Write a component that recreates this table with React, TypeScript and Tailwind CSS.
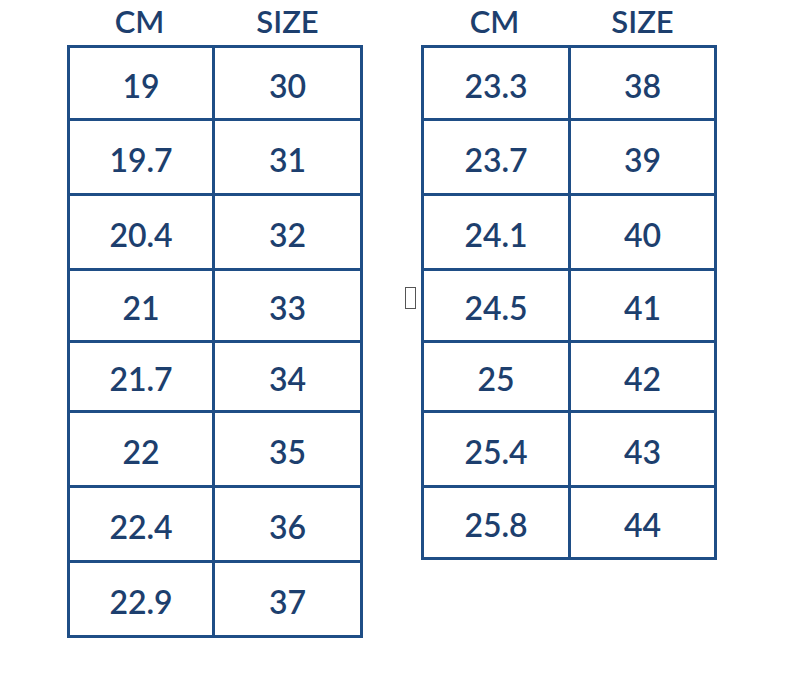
const left = [
  ["19", "30"],
  ["19.7", "31"],
  ["20.4", "32"],
  ["21", "33"],
  ["21.7", "34"],
  ["22", "35"],
  ["22.4", "36"],
  ["22.9", "37"],
];

const right = [
  ["23.3", "38"],
  ["23.7", "39"],
  ["24.1", "40"],
  ["24.5", "41"],
  ["25", "42"],
  ["25.4", "43"],
  ["25.8", "44"],
];

const leftHeights = [
  "h-[73px]",
  "h-[75px]",
  "h-[75px]",
  "h-[72px]",
  "h-[70px]",
  "h-[75px]",
  "h-[75px]",
  "h-[72px]",
];

const rightHeights = [
  "h-[73px]",
  "h-[75px]",
  "h-[75px]",
  "h-[72px]",
  "h-[70px]",
  "h-[75px]",
  "h-[69px]",
];

function SizeTable({
  rows,
  heights,
  cmWidth,
}: {
  rows: string[][];
  heights: string[];
  cmWidth: string;
}) {
  return (
    <div className="flex flex-col w-[296px]">
      <div className="flex h-[45px] items-center pb-[2px] text-[31px] font-semibold text-[#1d3f6e]">
        <div className={`${cmWidth} text-center`}>CM</div>
        <div className="flex-1 text-center">SIZE</div>
      </div>
      <div className="border-[3px] border-[#1f4e86]">
        {rows.map((r, i) => (
          <div
            key={r[0]}
            className={`flex ${heights[i]} ${i < rows.length - 1 ? "border-b-[3px] border-[#1f4e86]" : ""}`}
          >
            <div
              className={`${cmWidth} border-r-[3px] border-[#1f4e86] flex items-center justify-center pt-[5px]`}
            >
              {r[0]}
            </div>
            <div className="flex-1 flex items-center justify-center pt-[5px]">{r[1]}</div>
          </div>
        ))}
      </div>
    </div>
  );
}

export default function App() {
  return (
    <div
      className="w-[800px] h-[696px] bg-white flex pl-[67px] text-[32px] font-semibold text-[#1d3f6e]"
      style={{ fontFamily: "Lato, 'Noto Sans', sans-serif" }}
    >
      <SizeTable rows={left} heights={leftHeights} cmWidth="w-[145px]" />
      <div className="w-[58px] flex justify-end pr-[5px] pt-[287px]">
        <span className="w-[11px] h-[22px] border border-[#555]" />
      </div>
      <SizeTable rows={right} heights={rightHeights} cmWidth="w-[147px]" />
    </div>
  );
}
